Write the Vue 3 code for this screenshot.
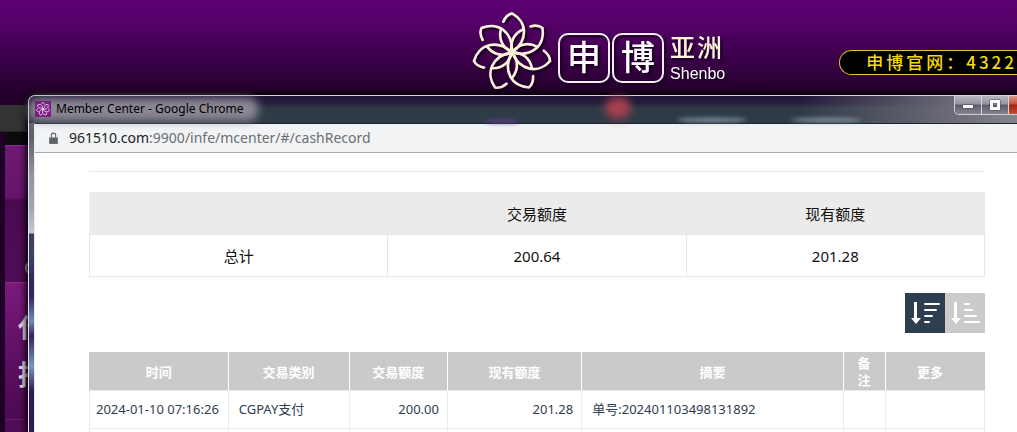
<script setup>
import { ref } from 'vue'

// flower logo, seven arms turned around the centre
const arms = [0, 1, 2, 3, 4, 5, 6].map((n) => (n * 360) / 7)

const total = { amount: '200.64', balance: '201.28' }

const records = ref([
  {
    time: '2024-01-10 07:16:26',
    type: 'CGPAY支付',
    amount: '200.00',
    balance: '201.28',
    summary: '单号:202401103498131892'
  }
])

const order = ref('desc')
</script>

<template>
  <div class="page">
    <header class="site-header">
      <div class="brand">
        <svg class="flower" viewBox="-120 -124 240 240" aria-hidden="true">
          <g v-for="a in arms" :key="a" :transform="`rotate(${a})`">
            <path d="M-26 -92 Q-17 -113 0 -117 C20 -106 36 -86 36 -62 C36 -35 20 -14 0 0" />
            <path d="M0 0 C-26 -12 -42 -38 -33 -70" />
          </g>
        </svg>
        <span class="seal">申</span>
        <span class="seal">博</span>
        <div class="brand-side">
          <span class="brand-zh">亚洲</span>
          <span class="brand-en">Shenbo</span>
        </div>
      </div>
      <div class="site-url">申博官网：4322</div>
    </header>
    <nav class="site-nav"></nav>
    <aside class="site-side">
      <div class="side-block"><span class="side-ring"></span></div>
      <a href="#" class="side-block side-text">代理<br />指南</a>
      <div class="side-block side-rest"></div>
    </aside>

    <section class="window">
      <div class="title-bar">
        <svg class="favicon" viewBox="-140 -140 280 280" aria-hidden="true">
          <g v-for="a in arms" :key="a" :transform="`rotate(${a})`">
            <path d="M-26 -92 Q-17 -113 0 -117 C20 -106 36 -86 36 -62 C36 -35 20 -14 0 0" />
          </g>
        </svg>
        <span class="title">Member Center - Google Chrome</span>
        <i class="blur blur-red"></i>
        <i class="blur blur-violet"></i>
        <i class="blur blur-light"></i>
        <i class="blur blur-light second"></i>
        <div class="controls">
          <button type="button" aria-label="Minimize">
            <svg viewBox="0 0 12 10"><rect x="1" y="5" width="10" height="3" /></svg>
          </button>
          <button type="button" aria-label="Maximize">
            <svg viewBox="0 0 12 10">
              <path fill-rule="evenodd" d="M1 0h10v10H1z M4 3v4h4V3z" />
            </svg>
          </button>
          <button type="button" class="close" aria-label="Close"></button>
        </div>
      </div>

      <div class="window-body">
        <div class="address">
          <svg class="lock" viewBox="0 0 10 12" aria-hidden="true">
            <path d="M1 5h8v6H1z" />
            <path class="shackle" d="M3 5V3a2 2 0 0 1 4 0v2" />
          </svg>
          <span><b>961510.com</b>:9900/infe/mcenter/#/cashRecord</span>
        </div>

        <main class="content">
          <hr />
          <table class="summary">
            <thead>
              <tr>
                <th></th>
                <th>交易额度</th>
                <th>现有额度</th>
              </tr>
            </thead>
            <tbody>
              <tr>
                <td>总计</td>
                <td>{{ total.amount }}</td>
                <td>{{ total.balance }}</td>
              </tr>
            </tbody>
          </table>

          <div class="sort">
            <button type="button" :class="{ active: order === 'desc' }" aria-label="降序" @click="order = 'desc'">
              <svg viewBox="0 0 40 40">
                <path d="M9 9h3v16h4l-5 6-5-6h3z" />
                <path class="bars" d="M20 11h14M20 17h11M20 23h7M20 29h4" />
              </svg>
            </button>
            <button type="button" :class="{ active: order === 'asc' }" aria-label="升序" @click="order = 'asc'">
              <svg viewBox="0 0 40 40">
                <path d="M9 9h3v16h4l-5 6-5-6h3z" />
                <path class="bars" d="M20 11h4M20 17h7M20 23h11M20 29h14" />
              </svg>
            </button>
          </div>

          <table class="records">
            <colgroup>
              <col class="c-time" />
              <col class="c-type" />
              <col class="c-amount" />
              <col class="c-balance" />
              <col />
              <col class="c-note" />
              <col class="c-more" />
            </colgroup>
            <thead>
              <tr>
                <th>时间</th>
                <th>交易类别</th>
                <th>交易额度</th>
                <th>现有额度</th>
                <th>摘要</th>
                <th class="note">备注</th>
                <th class="more">更多</th>
              </tr>
            </thead>
            <tbody>
              <tr v-for="r in records" :key="r.time">
                <td class="time">{{ r.time }}</td>
                <td>{{ r.type }}</td>
                <td class="num">{{ r.amount }}</td>
                <td class="num">{{ r.balance }}</td>
                <td>{{ r.summary }}</td>
                <td></td>
                <td></td>
              </tr>
              <tr class="empty">
                <td v-for="n in 7" :key="n"></td>
              </tr>
            </tbody>
          </table>
        </main>
      </div>
    </section>
  </div>
</template>

<style>
body {
  margin: 0;
  background: #0b0b0b;
}
</style>

<style scoped>
.page {
  position: relative;
  display: flex;
  flex-direction: column;
  min-height: 100vh;
  overflow: hidden;
  background: linear-gradient(to right, #1e0028 5px, #0b0b0b 5px);
  font-family: "Noto Sans", "Noto Sans CJK SC", sans-serif;
}

.site-header {
  display: flex;
  align-items: flex-start;
  justify-content: flex-end;
  gap: 114px;
  height: 105px;
  background: linear-gradient(#5c0072, #560069 20%, #26002f 85%, #22002c);
}

.brand {
  display: flex;
  align-items: center;
  padding-top: 11px;
  color: #fff;
  filter: drop-shadow(2px 2px 1px #16001c);
}
.flower {
  width: 80px;
  height: 80px;
  margin-right: 6px;
}
.flower path,
.favicon path {
  fill: none;
  stroke: #fbf3dc;
  stroke-width: 8;
  stroke-linecap: round;
}
.seal {
  display: flex;
  align-items: center;
  justify-content: center;
  box-sizing: border-box;
  width: 52px;
  height: 50px;
  margin-top: 13px;
  margin-right: 2px;
  padding-bottom: 4px;
  border: 2px solid #f4eef4;
  border-radius: 10px;
  font-family: "Noto Sans CJK SC", sans-serif;
  font-size: 34px;
  font-weight: 500;
  line-height: 42px;
}
.brand-side {
  display: flex;
  flex-direction: column;
  gap: 6px;
  margin-top: 13px;
  margin-left: 4px;
}
.brand-zh {
  color: #fbf3dc;
  font-family: "Noto Sans CJK SC", sans-serif;
  font-size: 25px;
  font-weight: 500;
  line-height: 26px;
  letter-spacing: 2px;
}
.brand-en {
  font-family: "Liberation Sans", sans-serif;
  font-size: 16px;
  line-height: 18px;
}

.site-url {
  box-sizing: border-box;
  min-width: 177px;
  height: 25px;
  margin-top: 50px;
  padding-left: 26px;
  border: 1px solid #e3c23c;
  border-right: 0;
  border-radius: 14px 0 0 14px;
  background: #000;
  color: #f5d90a;
  font-family: "Noto Sans CJK SC", sans-serif;
  font-size: 17px;
  font-weight: 500;
  line-height: 22px;
  letter-spacing: 3px;
  white-space: nowrap;
}

.site-nav {
  height: 26px;
  margin-bottom: 13px;
  background: #333;
  border-bottom: 1px solid #222;
}

.site-side {
  display: flex;
  flex: 1;
  flex-direction: column;
  width: 80px;
  margin-left: 5px;
}
.side-block {
  display: block;
  box-sizing: border-box;
  height: 137px;
  border-top: 1px solid #8a2f8e;
  background: linear-gradient(#701a73, #65146a 38%, #4a0a50 40%, #500d56);
}
.side-text {
  padding: 21px 0 0 13px;
  background: linear-gradient(#7a1a7c, #5b0f60 60%, #4c0a52);
  color: #e6dce8;
  font-size: 27px;
  font-weight: 700;
  line-height: 47px;
  text-decoration: none;
}
.side-rest {
  flex: 1;
  height: auto;
  border-top-color: #661a6a;
  background: #500d56;
}
.side-ring {
  display: block;
  width: 14px;
  height: 12px;
  margin-left: 20px;
  border: 2px solid #c9b5cc;
  border-radius: 50%;
  translate: 0 114px;
}

/* popup window lies over the site */
.window {
  position: absolute;
  top: 95px;
  right: 0;
  bottom: 0;
  left: 28px;
  display: flex;
  flex-direction: column;
  box-sizing: border-box;
  padding-left: 5px;
  border-top: 1px solid #d8d3de;
  border-left: 1px solid #e5e8ee;
  border-radius: 7px 0 0 0;
  background: linear-gradient(#77707f, #5c6068 40px, #8e97a3 80px, #9aa5b0 110px, #c3cad2 137px, #3a3e5a 138px, #3a4468 160px, #2e2758 185px, #33245c 200px, #6c8bb4 225px, #33245c 240px, #7796bc 270px, #2e1d52 295px, #2e1d52);
  box-shadow: 0 0 7px 2px #000;
}

.title-bar {
  position: relative;
  z-index: 0;
  display: flex;
  height: 27px;
  margin-left: -5px;
  padding-left: 6px;
  border-radius: 6px 0 0 0;
  background:
    linear-gradient(to right, rgba(0, 0, 0, 0) 78%, #72707c 95%, #82868c),
    linear-gradient(#221538, #25203c 28%, #2e3b46 45%, #2f3b46);
}
.favicon {
  z-index: 1;
  width: 16px;
  height: 16px;
  margin-top: 5px;
  background: #7a1e80;
}
.favicon path {
  stroke: #f0d8f2;
  stroke-width: 14;
}
.title {
  position: relative;
  margin-left: 5px;
  color: #000;
  font-size: 12px;
  line-height: 25px;
}
.title::before {
  content: "";
  position: absolute;
  inset: 2px -14px 2px -27px;
  z-index: -1;
  border-radius: 9px;
  background: #8b8793;
  filter: blur(4px);
}

/* site content showing through the glass */
.blur {
  position: absolute;
  top: 1px;
  left: 576px;
  width: 26px;
  height: 22px;
  border-radius: 50%;
  background: #a5404e;
  filter: blur(4px);
}
.blur-violet {
  top: 23px;
  left: 456px;
  width: 34px;
  height: 4px;
  background: #5a3c86;
  filter: blur(2px);
}
.blur-light {
  top: 22px;
  left: 648px;
  width: 70px;
  height: 4px;
  background: #8499a8;
  filter: blur(2px);
}
.blur-light.second {
  left: 762px;
}

.controls {
  display: flex;
  box-sizing: border-box;
  height: 19px;
  margin-left: auto;
  border: 1px solid #cfcdd6;
  border-top: 0;
  border-right: 0;
  border-radius: 0 0 0 5px;
  overflow: hidden;
}
.controls button {
  display: flex;
  align-items: center;
  justify-content: center;
  width: 27px;
  padding: 0;
  border: 0;
  border-right: 1px solid #d6d4dc;
  background: linear-gradient(#b9b6c0, #94929e 45%, #5d5c6b 50%, #85848f);
}
.controls svg {
  width: 12px;
  height: 10px;
  overflow: visible;
  fill: #fff;
  stroke: #4c4c5c;
  stroke-width: 1;
  paint-order: stroke;
}
.controls .close {
  width: 8px;
  border-right: 0;
  background: linear-gradient(#d99a8c, #c0503c 45%, #a02410 50%, #c0503a);
}

.window-body {
  flex: 1;
  min-height: 0;
  overflow: hidden;
  border-top: 1px solid #1f242b;
  border-left: 1px solid #e8eaee;
  background: #fff;
}

.address {
  display: flex;
  align-items: center;
  height: 28px;
  padding-left: 13px;
  border-bottom: 1px solid #a9acb0;
  background: #f1f3f4;
  color: #6b6f74;
  font-size: 14px;
  line-height: 28px;
}
.address b {
  color: #202124;
  font-weight: 400;
}
.lock {
  width: 11px;
  height: 13px;
  margin-right: 10px;
  fill: #5f6368;
}
.shackle {
  fill: none;
  stroke: #5f6368;
  stroke-width: 1;
}

.content {
  padding: 18px 32px 0 54px;
}
hr {
  height: 1px;
  margin: 0 0 20px;
  border: 0;
  background: #e8e8e8;
}

table {
  width: 100%;
  border-collapse: collapse;
  table-layout: fixed;
}

.summary {
  color: #111;
  font-size: 15px;
  line-height: 20px;
  text-align: center;
}
.summary th {
  height: 41px;
  padding: 0;
  border: 1px solid #ebebeb;
  border-bottom: 0;
  background: #ebebeb;
  font-weight: 400;
}
.summary td {
  height: 41px;
  padding: 0;
  border: 1px solid #e8e8e8;
}

.sort {
  display: flex;
  justify-content: flex-end;
  margin: 16px 0 19px;
}
.sort button {
  width: 40px;
  height: 40px;
  padding: 0;
  border: 0;
  background: #cbcbcb;
}
.sort button.active {
  background: #2f3d50;
}
.sort svg {
  display: block;
  fill: #fff;
}
.bars {
  stroke: #fff;
  stroke-width: 2;
  stroke-linecap: round;
}

.records {
  color: #2f3d50;
  font-size: 13px;
  line-height: 17px;
}
.c-time {
  width: 15.5%;
}
.c-type {
  width: 13.5%;
}
.c-amount {
  width: 11%;
}
.c-balance {
  width: 15%;
}
.c-note {
  width: 4.7%;
}
.c-more {
  width: 11.1%;
}
.records th {
  height: 38px;
  padding: 0;
  border-left: 1px solid #fff;
  background: #cacaca;
  color: #fff;
  font-family: "Noto Sans CJK SC", sans-serif;
  font-weight: 700;
}
.records th:first-child {
  border-left-color: #cacaca;
}
.records .note {
  padding: 0 12px;
}
.records .more {
  padding-right: 10px;
}
.records td {
  height: 37px;
  padding: 0 10px;
  border: 1px solid #ebebeb;
  white-space: nowrap;
}
.records .time {
  padding: 0 6px;
}
.records .num {
  padding: 0 8px;
  text-align: right;
}
.records .empty td {
  height: 4px;
  border-bottom: 0;
}
</style>
